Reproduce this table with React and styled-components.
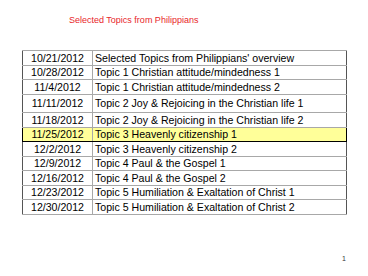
import styled, { createGlobalStyle } from "styled-components";

const topics = [
    { date: "10/21/2012", title: "Selected Topics from Philippians' overview" },
    { date: "10/28/2012", title: "Topic 1 Christian attitude/mindedness 1" },
    { date: "11/4/2012", title: "Topic 1 Christian attitude/mindedness 2" },
    { date: "11/11/2012", title: "Topic 2 Joy & Rejoicing in the Christian life 1", tall: true },
    { date: "11/18/2012", title: "Topic 2 Joy & Rejoicing in the Christian life 2" },
    { date: "11/25/2012", title: "Topic 3 Heavenly citizenship 1", current: true },
    { date: "12/2/2012", title: "Topic 3 Heavenly citizenship 2" },
    { date: "12/9/2012", title: "Topic 4 Paul & the Gospel 1" },
    { date: "12/16/2012", title: "Topic 4 Paul & the Gospel 2" },
    { date: "12/23/2012", title: "Topic 5 Humiliation & Exaltation of Christ 1" },
    { date: "12/30/2012", title: "Topic 5 Humiliation & Exaltation of Christ 2" },
];

function App() {
    return (
        <>
            <GlobalStyle />
            <Slide>
                <Title>Selected Topics from Philippians</Title>
                <Schedule>
                    <tbody>
                        {topics.map((t) => (
                            <Row key={t.date} $tall={t.tall} $current={t.current}>
                                <DateCell $current={t.current}>{t.date}</DateCell>
                                <TopicCell $current={t.current}>{t.title}</TopicCell>
                            </Row>
                        ))}
                    </tbody>
                </Schedule>
                <PageNumber>1</PageNumber>
            </Slide>
        </>
    );
}

export default App;

const GlobalStyle = createGlobalStyle`
    html, body {
        margin: 0;
        background: #ffffff;
    }
`;

const Slide = styled.div`
    width: 368px;
    height: 276px;
    display: flex;
    flex-direction: column;
    font-family: "Liberation Sans", Arial, sans-serif;
    color: #000;
`;

const Title = styled.div`
    margin: 15px 0 0 69px;
    font-size: 9px;
    line-height: 11px;
    color: #e8262a;
`;

const Schedule = styled.table`
    margin: 24px 0 0 22px;
    width: 325px;
    border-collapse: collapse;
    border: 1px solid #555;
    font-size: 10.6px;
`;

const Row = styled.tr`
    height: ${({ $tall }) => ($tall ? "18.5px" : "14.5px")};
    background: ${({ $current }) => ($current ? "#ffff99" : "#fff")};
`;

const Cell = styled.td`
    padding: 0 2px;
    line-height: 12px;
    white-space: nowrap;
    border-top: 1px solid #a8a8a8;
    border-bottom: 1px solid #a8a8a8;
    ${({ $current }) =>
        $current &&
        `border-top: 1.5px solid #000; border-bottom: 1.5px solid #000;`}
`;

const DateCell = styled(Cell)`
    width: 65px;
    text-align: center;
    border-right: 1px solid #a8a8a8;
    ${({ $current }) => $current && `border-left: 1.5px solid #000;`}
`;

const TopicCell = styled(Cell)`
    text-align: left;
    padding-left: 2px;
    ${({ $current }) => $current && `border-right: 1.5px solid #000;`}
`;

const PageNumber = styled.div`
    margin: auto 22px 14px auto;
    font-size: 7px;
    color: #333;
`;
